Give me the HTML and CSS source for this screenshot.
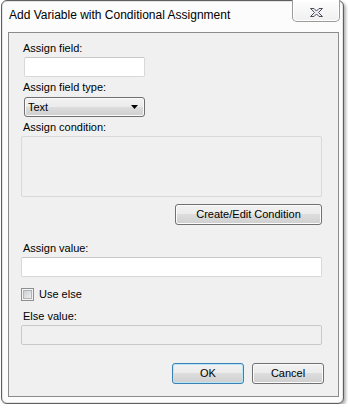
FILE: index.html
```html
<!DOCTYPE html>
<html>
<head>
<meta charset="utf-8">
<link rel="stylesheet" href="styles.css">
</head>
<body>
<div class="window">
  <div class="titlebar">Add Variable with Conditional Assignment</div>
  <div class="close">
    <svg class="xglyph" width="13" height="9" viewBox="0 0 13 9"><path d="M0.5,0.5 H4 L6.5,3 L9,0.5 H12.5 L8.5,4.5 L12.5,8.5 H9 L6.5,6 L4,8.5 H0.5 L4.5,4.5 Z" fill="#ececf0" stroke="#4a4d5c" stroke-width="1" stroke-linejoin="round"/></svg>
  </div>
  <div class="client">
    <div class="label first">Assign field:</div>
    <div class="input narrow"></div>
    <div class="label gap4">Assign field type:</div>
    <div class="combo"><span class="combo-text">Text</span><svg class="arrow" width="7" height="4" viewBox="0 0 7 4"><polygon points="0,0 7,0 3.5,4" fill="#000"/></svg></div>
    <div class="label gap4">Assign condition:</div>
    <div class="condbox"></div>
    <div class="btnrow-right"><div class="button wide">Create/Edit Condition</div></div>
    <div class="label gap17">Assign value:</div>
    <div class="input"></div>
    <div class="checkrow"><span class="check"><span class="check-inner"></span></span><span class="check-label">Use else</span></div>
    <div class="label gap9">Else value:</div>
    <div class="input disabled"></div>
    <div class="footer">
      <div class="button default">OK</div>
      <div class="button">Cancel</div>
    </div>
  </div>
</div>
</body>
</html>
```
FILE: styles.css
```css
html, body {
  margin: 0;
  padding: 0;
  background: #ffffff;
}
body {
  font-family: "Liberation Sans", Arial, sans-serif;
  font-size: 11px;
  color: #000;
}
.window {
  position: relative;
  margin-left: 1px;
  width: 343px;
  height: 404px;
  box-sizing: border-box;
  border: 1px solid #5f5f5f;
  border-radius: 6px;
  background: #fcfcfc;
  padding: 0 4px 6px 6px;
  box-shadow: 2px 2px 3px rgba(0,0,0,0.3), inset 0 0 0 1px #e4e4e4;
  display: flex;
  flex-direction: column;
}
.titlebar {
  height: 31px;
  box-sizing: border-box;
  padding: 7px 0 0 1px;
  font-size: 12px;
  line-height: 15px;
  white-space: nowrap;
}
.close {
  position: absolute;
  left: 290px;
  top: -1px;
  width: 48px;
  height: 22px;
  box-sizing: border-box;
  border: 1px solid #9a9a9a;
  border-top: none;
  border-radius: 0 0 5px 5px;
  background: linear-gradient(#fdfdfd, #f0f0f0);
  box-shadow: inset 0 0 0 1px #ffffff;
}
.xglyph {
  position: absolute;
  left: 17px;
  top: 8px;
}
.client {
  width: 331px;
  height: 365px;
  box-sizing: border-box;
  border: 1px solid #8c8c8c;
  background: #f0f0f0;
  padding: 9px 16px 0 12px;
  display: flex;
  flex-direction: column;
}
.label {
  height: 13px;
  line-height: 13px;
  padding-left: 2px;
  white-space: nowrap;
}
.gap4 { margin-top: 4px; }
.gap17 { margin-top: 17px; }
.gap9 { margin-top: 9px; }
.input {
  height: 20px;
  box-sizing: border-box;
  border: 1px solid #d8d8d8;
  border-top-color: #c8c8c8;
  border-radius: 2px;
  background: #ffffff;
  margin-top: 2px;
}
.narrow {
  width: 121px;
  margin-left: 3px;
}
.input.disabled {
  background: #f0f0f0;
  border-color: #c9c9c9;
}
.combo {
  margin-top: 3px;
  margin-left: 3px;
  width: 121px;
  height: 20px;
  box-sizing: border-box;
  border: 1px solid #707070;
  border-radius: 3px;
  background: linear-gradient(#f2f2f2 0%, #ebebeb 50%, #dddddd 50%, #cfcfcf 100%);
  box-shadow: inset 0 0 0 1px #fafafa;
  display: flex;
  align-items: center;
  padding-left: 3px;
  line-height: 13px;
}
.arrow {
  margin-left: auto;
  margin-right: 6px;
}
.condbox {
  margin-top: 2px;
  height: 61px;
  box-sizing: border-box;
  border: 1px solid #d9d9d9;
  border-radius: 2px;
  background: #f0f0f0;
}
.btnrow-right {
  margin-top: 7px;
  display: flex;
  justify-content: flex-end;
}
.button {
  width: 72px;
  height: 21px;
  box-sizing: border-box;
  border: 1px solid #707070;
  border-radius: 3px;
  background: linear-gradient(#f2f2f2 0%, #ebebeb 50%, #dddddd 50%, #cfcfcf 100%);
  box-shadow: inset 0 0 0 1px #fbfbfb;
  display: flex;
  align-items: center;
  justify-content: center;
  line-height: 13px;
  padding-bottom: 1px;
  white-space: nowrap;
}
.button.wide {
  width: 147px;
}
.button.default {
  border-color: #3c7fb1;
  box-shadow: inset 0 0 0 1px #b6e6f8;
}
.checkrow {
  margin-top: 11px;
  height: 13px;
  display: flex;
  align-items: center;
}
.check {
  width: 13px;
  height: 13px;
  box-sizing: border-box;
  border: 1px solid #8e8f8f;
  background: #f4f4f4;
  padding: 1px;
}
.check-inner {
  display: block;
  width: 9px;
  height: 9px;
  box-sizing: border-box;
  border: 1px solid #b0b4b9;
  background: linear-gradient(135deg, #cbcfd4, #eeeeee);
}
.check-label {
  margin-left: 5px;
  line-height: 13px;
}
.footer {
  margin-top: 18px;
  margin-right: -2px;
  display: flex;
  justify-content: flex-end;
  gap: 8px;
}
```
